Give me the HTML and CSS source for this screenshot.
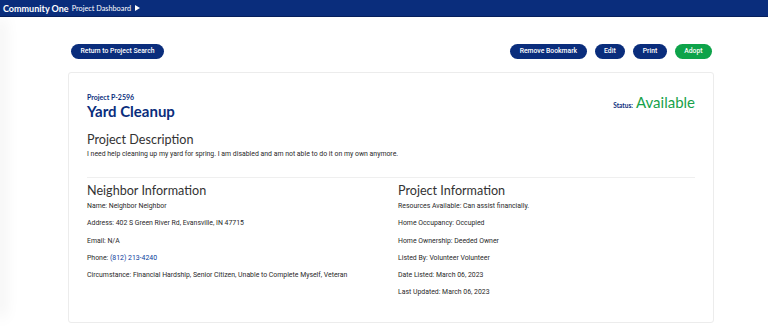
FILE: index.html
```html
<!DOCTYPE html>
<html>
<head>
<meta charset="utf-8">
<link rel="stylesheet" href="styles.css">
</head>
<body>
<header class="topbar">
  <span class="brand">Community One</span>
  <span class="crumb">Project Dashboard</span>
  <svg class="caret" width="5" height="6" viewBox="0 0 5 6"><path d="M0 0 L5 3 L0 6 Z" fill="#fff"/></svg>
</header>
<div class="layout">
  <div class="sidebar"></div>
  <main class="main">
    <div class="actions">
      <button class="btn">Return to Project Search</button>
      <div class="actions-right">
        <button class="btn">Remove Bookmark</button>
        <button class="btn">Edit</button>
        <button class="btn">Print</button>
        <button class="btn btn-green">Adopt</button>
      </div>
    </div>
    <section class="card">
      <div class="title-row">
        <div>
          <div class="proj-id">Project P-2596</div>
          <h1 class="title">Yard Cleanup</h1>
        </div>
        <div class="status"><span class="status-label">Status:</span> <span class="status-value">Available</span></div>
      </div>
      <h2 class="heading desc-heading">Project Description</h2>
      <p class="desc">I need help cleaning up my yard for spring. I am disabled and am not able to do it on my own anymore.</p>
      <hr class="divider">
      <div class="cols">
        <div class="col">
          <h2 class="heading">Neighbor Information</h2>
          <p class="item">Name: Neighbor Neighbor</p>
          <p class="item">Address: 402 S Green River Rd, Evansville, IN 47715</p>
          <p class="item">Email: N/A</p>
          <p class="item">Phone: <a class="link">(812) 213-4240</a></p>
          <p class="item">Circumstance: Financial Hardship, Senior Citizen, Unable to Complete Myself, Veteran</p>
        </div>
        <div class="col">
          <h2 class="heading">Project Information</h2>
          <p class="item">Resources Available: Can assist financially.</p>
          <p class="item">Home Occupancy: Occupied</p>
          <p class="item">Home Ownership: Deeded Owner</p>
          <p class="item">Listed By: Volunteer Volunteer</p>
          <p class="item">Date Listed: March 06, 2023</p>
          <p class="item">Last Updated: March 06, 2023</p>
        </div>
      </div>
    </section>
  </main>
</div>
</body>
</html>
```

FILE: styles.css
```css
* { box-sizing: border-box; }
html, body { margin: 0; padding: 0; background: #fff; }
body { font-family: Roboto, "Liberation Sans", sans-serif; color: #333; overflow: hidden; height: 329px; }

.topbar {
  height: 17px;
  background: #0a2d7c;
  border-bottom: 1px solid #061f5c;
  display: flex;
  align-items: center;
  padding-left: 3px;
  color: #fff;
}
.brand { font-family: Lato, "Noto Sans", sans-serif; font-weight: 700; font-size: 9px; }
.crumb { font-family: Lato, "Noto Sans", sans-serif; font-size: 7.3px; margin-left: 3px; }
.caret { margin-left: 4px; }

.layout { display: flex; height: 312px; }
.sidebar {
  width: 0;
  margin-top: 6px;
  height: 290px;
  box-shadow: 0 0 16px 4px rgba(0,0,0,0.08);
}
.main { flex: 1; padding: 27px 54px 0 68px; }

.actions { display: flex; justify-content: space-between; padding: 0 2px 0 3px; }
.actions-right { display: flex; gap: 8px; }
.btn {
  background: #0a2d7c;
  color: #fff;
  border: none;
  border-radius: 8px;
  height: 15px;
  padding: 0 9.5px;
  font-family: Roboto, "Liberation Sans", sans-serif;
  font-size: 6.8px;
  font-weight: 500;
  line-height: 15px;
}
.btn-green { background: #0ea34a; }

.card {
  margin-top: 13px;
  border: 1px solid #ececec;
  border-radius: 3px;
  height: 251px;
  padding: 20px 18px 0 18px;
}
.title-row { display: flex; justify-content: space-between; align-items: flex-start; }
.proj-id { font-family: Lato, "Noto Sans", sans-serif; font-weight: 700; font-size: 7px; color: #0a2d7c; line-height: 9px; }
.title { font-family: Lato, "Noto Sans", sans-serif; font-weight: 700; font-size: 15px; color: #0a2d7c; margin: 0; line-height: 18px; }
.status { margin-top: 0; margin-right: 0; display: flex; align-items: baseline; gap: 3px; }
.status-label { font-family: Lato, "Noto Sans", sans-serif; font-weight: 700; font-size: 6.5px; color: #0a2d7c; }
.status-value { font-family: Lato, "Noto Sans", sans-serif; font-size: 15px; color: #17a24a; }

.heading { font-family: Lato, "Noto Sans", sans-serif; font-weight: 400; font-size: 12.6px; color: #333; margin: 0; line-height: 16px; }
.desc-heading { margin-top: 12px; }
.desc { font-size: 6.9px; margin: 2px 0 0 0; line-height: 9px; color: #2a2a2a; }
.divider { border: none; border-top: 1px solid #efefef; margin: 18px 0 0 0; }

.cols { display: grid; grid-template-columns: 311px 1fr; margin-top: 5px; }
.item { font-size: 6.9px; margin: 0; line-height: 9px; height: 17.25px; color: #2a2a2a; }
.heading + .item { margin-top: 3px; }
.link { color: #0a3d9c; }
```
